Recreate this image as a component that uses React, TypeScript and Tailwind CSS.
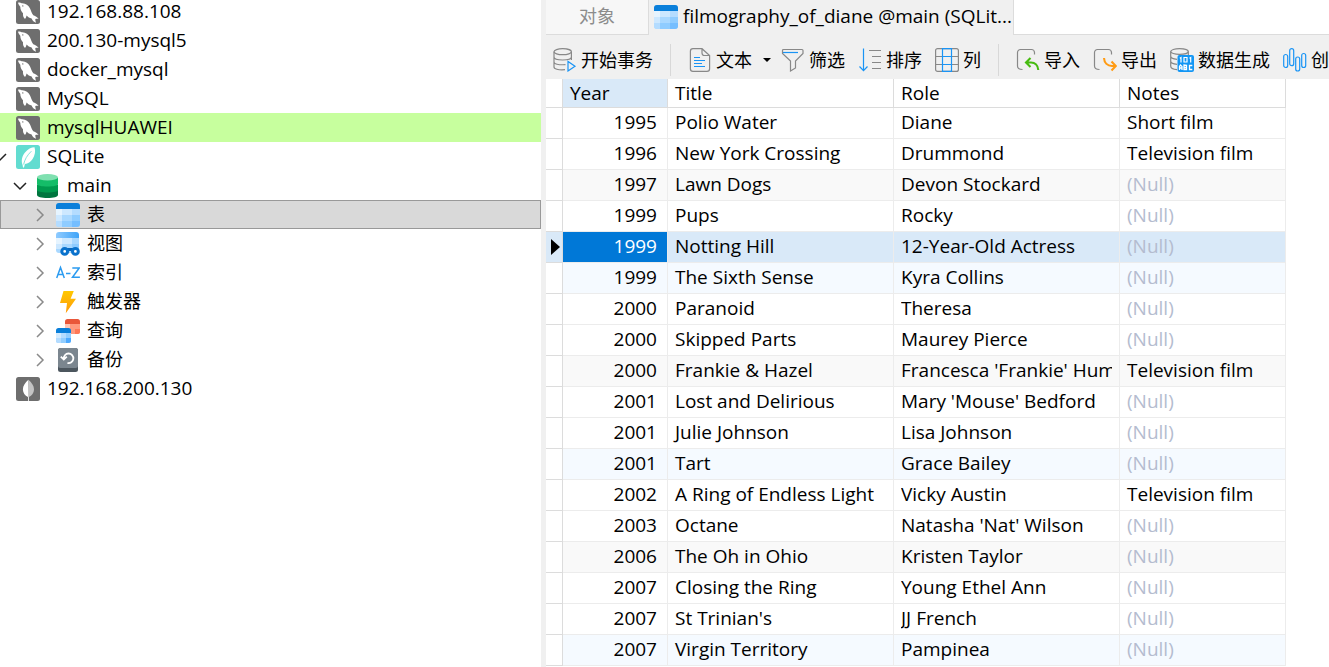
import React from "react";

function MysqlIcon() {
  return (
    <svg viewBox="0 0 24 24" className="size-6 shrink-0" aria-hidden="true">
      <rect width="24" height="24" rx="2.5" fill="#6e6e6e" />
      <path
        d="M2 2.800C3 2.300 4.500 2.400 5.600 3.200C9.500 2.900 12.400 5.200 13.900 8.200C15 10.500 15.800 13.200 17.300 15.300C18.800 15.900 21 16.600 22.600 18.900C21.300 18.500 20.200 18.600 19.300 19C19.300 20.300 19.400 21.400 20 22.700C17.900 22 16.500 20.400 15.600 18.400C13.600 18 11.900 16.800 10.600 15.400C10.300 16.700 9.800 17.900 9 19C7.300 17.500 6.800 15.500 7 13.200C5.200 11.600 4.300 9.300 4.300 6.800C3.200 5.600 2.300 4.300 2 2.800Z"
        fill="#fff"
      />
      <circle cx="6.800" cy="5.900" r="0.700" fill="#6e6e6e" />
    </svg>
  );
}

function SqliteIcon() {
  return (
    <svg viewBox="0 0 24 24" className="size-6 shrink-0" aria-hidden="true">
      <rect width="24" height="24" rx="2.500" fill="#62dcd0" />
      <path
        d="M6.600 20C4.800 15.500 6.200 11 9 7.500C11.800 4 15.500 2.300 18.500 2.300C19.800 6 18.900 10.500 16.600 14C14.600 17.100 12 18.800 8.900 18.900L8 22.500H7Z"
        fill="#fff"
      />
      <path d="M7.600 19.500C8.700 14.500 11.200 10.200 15.400 6.200" fill="none" stroke="#62dcd0" strokeWidth="0.800" />
    </svg>
  );
}

function MongoIcon() {
  return (
    <svg viewBox="0 0 24 24" className="size-6 shrink-0" aria-hidden="true">
      <rect width="24" height="24" rx="2.500" fill="#6e6e6e" />
      <path d="M12.400 2.800C9 6 6.900 8.800 6.900 12.400C6.900 15.700 8.900 18.300 12 20V24H12.800V20Z" fill="#fff" />
      <path d="M12.400 2.800C15.900 6 18 8.800 18 12.400C18 15.700 15.900 18.300 12.800 20L12.400 20Z" fill="#c4c4c4" />
    </svg>
  );
}

function DatabaseIcon() {
  return (
    <svg viewBox="0 0 24 24" className="size-6 shrink-0" aria-hidden="true">
      <path d="M1 16V21C1 22.700 5.500 24 11.500 24S22 22.700 22 21V16Z" fill="#00753f" />
      <path d="M1 10.500V16C1 17.500 5.500 18.500 11.500 18.500S22 17.500 22 16V10.500Z" fill="#009a4e" />
      <path d="M1 3.500V10C1 11.600 5.500 12.500 11.500 12.500S22 11.600 22 10V3.500Z" fill="#14bd68" />
      <ellipse cx="11.500" cy="3.200" rx="10.500" ry="3.200" fill="#7fe0b0" />
    </svg>
  );
}

function TableIcon() {
  return (
    <svg viewBox="0 0 24 24" className="size-6 shrink-0" aria-hidden="true">
      <defs>
        <clipPath id="table-clip">
          <rect width="24" height="24" rx="3" />
        </clipPath>
      </defs>
      <g clipPath="url(#table-clip)">
        <rect width="24" height="24" fill="#a9d8ff" />
        <rect width="24" height="6" fill="#0a7fda" />
        <path d="M0 6H6V12H0Z" fill="#e6f4ff" />
        <path d="M6 6H16V12H6ZM0 12H6V18H0Z" fill="#cde8ff" />
        <path d="M0 18H6V24H0ZM16 6H24V12H16Z" fill="#b4dcff" />
        <path d="M16 12H24V18H16ZM6 18H16V24H6Z" fill="#8fccff" />
        <path d="M16 18H24V24H16Z" fill="#75beff" />
      </g>
    </svg>
  );
}

function ViewIcon() {
  return (
    <svg viewBox="0 0 24 24" className="size-6 shrink-0" aria-hidden="true">
      <defs>
        <linearGradient id="view-head" x1="0" x2="1">
          <stop offset="0" stopColor="#8fcbff" />
          <stop offset="1" stopColor="#3fa4f8" />
        </linearGradient>
      </defs>
      <path d="M0 6V3A3 3 0 0 1 3 0H20A3 3 0 0 1 23 3V6Z" fill="url(#view-head)" />
      <path d="M0 6H23V21H3A3 3 0 0 1 0 18Z" fill="#a9d8ff" />
      <path d="M0 6H6V12H0Z" fill="#e6f4ff" />
      <path d="M6 6H16V12H6ZM0 12H6V17H0Z" fill="#cde8ff" />
      <path d="M16 12H23V18H16Z" fill="#8fccff" />
      <path d="M9 17.500H19" stroke="#0867bd" strokeWidth="3" />
      <circle cx="8.700" cy="19.400" r="2.900" fill="#fff" stroke="#0a72cc" strokeWidth="3" />
      <circle cx="19.400" cy="19.400" r="2.900" fill="#fff" stroke="#0a72cc" strokeWidth="3" />
    </svg>
  );
}

function IndexIcon() {
  return (
    <svg viewBox="0 0 24 24" className="size-6 shrink-0" fill="none" stroke="#2b9bf0" strokeWidth="1.500" aria-hidden="true">
      <path d="M0.700 17L4.500 6.500L8.300 17M2 13.500H7M10 12.500H14.500M16.300 7H23.200L16.500 16.300H23.900" />
    </svg>
  );
}

function TriggerIcon() {
  return (
    <svg viewBox="0 0 24 24" className="size-6 shrink-0" aria-hidden="true">
      <defs>
        <linearGradient id="bolt" x1="0" y1="0" x2="0" y2="1">
          <stop offset="0" stopColor="#ffc800" />
          <stop offset="1" stopColor="#ff9a0a" />
        </linearGradient>
      </defs>
      <path d="M7.500 1H17.800L14.600 8.800H20L9.800 23.200L11 13H4Z" fill="url(#bolt)" />
    </svg>
  );
}

function QueryIcon() {
  return (
    <svg viewBox="0 0 24 24" className="size-6 shrink-0" aria-hidden="true">
      <path d="M9 5V2.500A2.500 2.500 0 0 1 11.500 0H21.500A2.500 2.500 0 0 1 24 2.500V5Z" fill="#e9573a" />
      <path d="M9 5H24V12.500A2.500 2.500 0 0 1 21.500 15H9Z" fill="#ff9a7f" />
      <path d="M9 5H14V10H9Z" fill="#ffc5b5" />
      <path d="M19 10H24V12.500A2.500 2.500 0 0 1 21.500 15H19Z" fill="#ff7856" />
      <path d="M0 14V11.500A2.500 2.500 0 0 1 2.500 9H12.500A2.500 2.500 0 0 1 15 11.500V14Z" fill="#0a7fda" />
      <path d="M0 14H15V21.500A2.500 2.500 0 0 1 12.500 24H2.500A2.500 2.500 0 0 1 0 21.500Z" fill="#93ceff" />
      <path d="M0 14H5V19H0Z" fill="#d3ebff" />
      <path d="M5 14H10V19H5ZM0 19H5V24H2.500A2.500 2.500 0 0 1 0 21.500Z" fill="#b4dcff" />
      <path d="M10 19H15V21.500A2.500 2.500 0 0 1 12.500 24H10Z" fill="#4eaaff" />
    </svg>
  );
}

function BackupIcon() {
  return (
    <svg viewBox="0 0 24 24" className="size-6 shrink-0" aria-hidden="true">
      <rect x="2" width="20" height="24" rx="2.500" fill="#4c565e" />
      <rect x="2" width="20" height="20" rx="2.500" fill="#7b868f" />
      <path d="M7.800 11A4.800 4.800 0 1 1 11.500 15M4.800 8.600L7.800 11.600L10.800 8.600" fill="none" stroke="#fff" strokeWidth="1.800" />
    </svg>
  );
}

function Chevron({ open = false }: { open?: boolean }) {
  return (
    <svg viewBox="0 0 16 16" className="size-4 shrink-0" fill="none" stroke={open ? "#222" : "#8a8a8a"} strokeWidth="1.500" aria-hidden="true">
      <path d={open ? "M2 5L8 11L14 5" : "M5 2L11 8L5 14"} />
    </svg>
  );
}

function TransactionIcon() {
  return (
    <svg viewBox="0 0 24 24" className="size-6 shrink-0" fill="none" stroke="#888" strokeWidth="1.200" aria-hidden="true">
      <ellipse cx="9.700" cy="3.700" rx="8.700" ry="3" />
      <path d="M1 3.700V19C1 21 5 22.200 12 21.700M18.400 3.700V12M1 9C1 11 5 12 9.700 12S18.400 11 18.400 9M1 14C1 16 5 17 12.500 16.700" />
      <path d="M15 13.500V23L22 18.300Z" stroke="#1a94f5" />
    </svg>
  );
}

function TextIcon() {
  return (
    <svg viewBox="0 0 24 24" className="size-6 shrink-0" fill="none" stroke="#888" strokeWidth="1.200" aria-hidden="true">
      <path d="M14 0.700H5A2.600 2.600 0 0 0 2.400 3.300V20.700A2.600 2.600 0 0 0 5 23.300H19A2.600 2.600 0 0 0 21.600 20.700V7.500ZM14 0.700V5A2.500 2.500 0 0 0 16.500 7.500H21.600" />
      <path d="M6 9.500H12M6 12.500H17M6 15.500H14M6 18.500H17" stroke="#1a94f5" />
    </svg>
  );
}

function FilterIcon() {
  return (
    <svg viewBox="0 0 24 24" className="size-6 shrink-0" fill="none" stroke="#888" strokeWidth="1.200" aria-hidden="true">
      <path d="M2.500 1.500H21A1 1 0 0 1 22 2.500V5.500L14.500 13V20L9.500 23V13L1.500 5.500V2.500A1 1 0 0 1 2.500 1.500Z" />
      <path d="M2 4.500H17" stroke="#1a94f5" />
    </svg>
  );
}

function SortIcon() {
  return (
    <svg viewBox="0 0 24 24" className="size-6 shrink-0" fill="none" stroke="#888" strokeWidth="1.200" aria-hidden="true">
      <path d="M11 2.500H23M14 8.500H23M14 14.500H23M14 20.500H23" />
      <path d="M5.500 0.500V23M1.500 18.500L5.500 22.700L9.500 18.500" stroke="#1a94f5" />
    </svg>
  );
}

function ColumnsIcon() {
  return (
    <svg viewBox="0 0 24 24" className="size-6 shrink-0" fill="none" stroke="#888" strokeWidth="1.200" aria-hidden="true">
      <rect x="0.600" y="0.600" width="22.800" height="22.800" rx="2" />
      <path d="M0.500 8.500H23.500M0.500 16.500H23.500" />
      <path d="M7.500 0.600H16.500V23.400H7.500ZM7.500 8.500H16.500M7.500 16.500H16.500" stroke="#1a94f5" />
    </svg>
  );
}

function ImportIcon() {
  return (
    <svg viewBox="0 0 24 24" className="size-6 shrink-0" fill="none" aria-hidden="true">
      <path d="M18.500 6.500V4.500A3 3 0 0 0 15.500 1.500H4.500A3 3 0 0 0 1.500 4.500V18C1.500 20.500 3 21.500 6.500 21.500" stroke="#888" strokeWidth="1.200" />
      <path d="M14.500 10L10 14.500L14.500 19M10.500 14.500H15C19 14.500 22 17.500 22.300 22" stroke="#46bb10" strokeWidth="2.100" />
    </svg>
  );
}

function ExportIcon() {
  return (
    <svg viewBox="0 0 24 24" className="size-6 shrink-0" fill="none" aria-hidden="true">
      <path d="M18.500 6.500V4.500A3 3 0 0 0 15.500 1.500H4.500A3 3 0 0 0 1.500 4.500V18C1.500 20.500 3 21.500 6.500 21.500" stroke="#888" strokeWidth="1.200" />
      <path d="M18.500 13.500L22.800 18L18.500 22.500M22.300 18H19C14.500 18 11.300 15 11 10" stroke="#ff9b14" strokeWidth="2.100" />
    </svg>
  );
}

function GenerateIcon() {
  return (
    <svg viewBox="0 0 24 24" className="size-6 shrink-0" fill="none" stroke="#888" strokeWidth="1.200" aria-hidden="true">
      <ellipse cx="9.500" cy="3.500" rx="8.800" ry="2.900" />
      <path d="M0.700 3.500V18C0.700 20 3 21.400 7 21.700M18.300 3.500V8M0.700 8C0.700 10 3 11 7 11.300M0.700 13C0.700 15 3 16 7 16.300" />
      <rect x="7.500" y="7" width="16.500" height="17" rx="2" fill="#1296f5" stroke="none" />
      <path d="M9.800 10.200L11 9.500V14.500M14 9.500H17V14H14ZM19.500 10.200L20.700 9.500V14.500" stroke="#fff" />
      <path d="M9.500 22V18.500L10.500 17L12 18.500V22M9.500 20H12M14 17V21.500H16.500V19.500H14.500H16.500V17.300ZM22.300 17.500H19.500V21.500H22.300" stroke="#fff" strokeWidth="1.300" />
    </svg>
  );
}

function ChartIcon() {
  return (
    <svg viewBox="0 0 24 24" className="size-6 shrink-0" fill="none" stroke="#1a94f5" strokeWidth="1.200" aria-hidden="true">
      <rect x="0.700" y="6.500" width="4" height="13" rx="2" />
      <rect x="6.700" y="0.700" width="4" height="17" rx="2" />
      <rect x="12.700" y="9" width="4" height="14" rx="2" />
      <rect x="18.700" y="5.500" width="4" height="14" rx="2" />
    </svg>
  );
}

type Node = {
  label: string;
  icon: () => React.JSX.Element;
  indent: string;
  state?: "open" | "closed";
  look?: string;
};

const root = "pl-4";
const child = "pl-8 text-[18px]";
const nodes: Node[] = [
  { label: "192.168.88.108", icon: MysqlIcon, indent: root },
  { label: "200.130-mysql5", icon: MysqlIcon, indent: root },
  { label: "docker_mysql", icon: MysqlIcon, indent: root },
  { label: "MySQL", icon: MysqlIcon, indent: root },
  { label: "mysqlHUAWEI", icon: MysqlIcon, indent: root, look: "bg-[#c7ff9e]" },
  { label: "SQLite", icon: SqliteIcon, indent: "-ml-2", state: "open" },
  { label: "main", icon: DatabaseIcon, indent: "pl-3", state: "open" },
  { label: "表", icon: TableIcon, indent: child, state: "closed", look: "bg-[#d9d9d9] outline outline-1 -outline-offset-1 outline-[#999]" },
  { label: "视图", icon: ViewIcon, indent: child, state: "closed" },
  { label: "索引", icon: IndexIcon, indent: child, state: "closed" },
  { label: "触发器", icon: TriggerIcon, indent: child, state: "closed" },
  { label: "查询", icon: QueryIcon, indent: child, state: "closed" },
  { label: "备份", icon: BackupIcon, indent: child, state: "closed" },
  { label: "192.168.200.130", icon: MongoIcon, indent: root },
];

const films: [number, string, string, string?][] = [
  [1995, "Polio Water", "Diane", "Short film"],
  [1996, "New York Crossing", "Drummond", "Television film"],
  [1997, "Lawn Dogs", "Devon Stockard"],
  [1999, "Pups", "Rocky"],
  [1999, "Notting Hill", "12-Year-Old Actress"],
  [1999, "The Sixth Sense", "Kyra Collins"],
  [2000, "Paranoid", "Theresa"],
  [2000, "Skipped Parts", "Maurey Pierce"],
  [2000, "Frankie & Hazel", "Francesca 'Frankie' Hump", "Television film"],
  [2001, "Lost and Delirious", "Mary 'Mouse' Bedford"],
  [2001, "Julie Johnson", "Lisa Johnson"],
  [2001, "Tart", "Grace Bailey"],
  [2002, "A Ring of Endless Light", "Vicky Austin", "Television film"],
  [2003, "Octane", "Natasha 'Nat' Wilson"],
  [2006, "The Oh in Ohio", "Kristen Taylor"],
  [2007, "Closing the Ring", "Young Ethel Ann"],
  [2007, "St Trinian's", "JJ French"],
  [2007, "Virgin Territory", "Pampinea"],
];

const selectedRow = 4;

function rowColor(i: number) {
  if (i === selectedRow) return "bg-[#d9e9f8]";
  if (i % 6 === 5) return "bg-[#f5faff]";
  if (i % 6 === 2) return "bg-[#f9f9f9]";
  return "bg-white";
}

function ToolButton({ icon: Icon, label, children }: { icon: () => React.JSX.Element; label: string; children?: React.ReactNode }) {
  return (
    <button type="button" className="flex shrink-0 items-center gap-1 whitespace-nowrap">
      <Icon />
      <span>{label}</span>
      {children}
    </button>
  );
}

function Divider() {
  return <div className="mx-1 h-8 w-px shrink-0 bg-[#d8d8d8]" />;
}

export default function App() {
  return (
    <div className="flex h-screen overflow-hidden bg-white font-['Open_Sans','Noto_Sans_CJK_SC',sans-serif] text-[19px] leading-[26px] text-black">
      <nav className="min-w-0 flex-[541_1_0%] overflow-hidden">
        <ul className="-mt-[3px]">
          {nodes.map((n) => (
            <li key={n.label} className={n.look}>
              <a href="#" className={`flex h-[29px] items-center whitespace-nowrap ${n.indent}`}>
                {n.state && (
                  <span className="mr-2 flex">
                    <Chevron open={n.state === "open"} />
                  </span>
                )}
                <n.icon />
                <span className="ml-[7px] pb-0.5">{n.label}</span>
              </a>
            </li>
          ))}
        </ul>
      </nav>

      <div className="w-[5px] shrink-0 bg-[#f0f0f0]" />

      <main className="min-w-0 flex-[783_1_0%] overflow-hidden">
        <div role="tablist" className="flex h-[35px]">
          <button type="button" role="tab" aria-selected="false" className="w-[103px] shrink-0 border-r border-b border-[#dcdcdc] bg-[#f7f7f7] pb-0.5 text-[18px] text-[#8c8c8c]">
            对象
          </button>
          <button type="button" role="tab" aria-selected="true" className="flex w-[365px] shrink-0 items-center gap-[5px] border-r border-[#dcdcdc] bg-[#f0f0f0] pb-0.5 pl-[5px] whitespace-nowrap">
            <TableIcon />
            <span className="pb-0.5">filmography_of_diane @main (SQLit...</span>
          </button>
          <div className="flex-1 border-b border-[#dcdcdc]" />
        </div>

        <div role="toolbar" className="flex h-11 items-center gap-[13px] overflow-hidden bg-[#f0f0f0] pt-1.5 pl-[7px] text-[18px]">
          <ToolButton icon={TransactionIcon} label="开始事务" />
          <Divider />
          <ToolButton icon={TextIcon} label="文本">
            <svg viewBox="0 0 8 4" className="-mr-[3px] ml-[7px] h-1 w-2" aria-hidden="true">
              <path d="M0 0H8L4 4Z" />
            </svg>
          </ToolButton>
          <ToolButton icon={FilterIcon} label="筛选" />
          <ToolButton icon={SortIcon} label="排序" />
          <ToolButton icon={ColumnsIcon} label="列" />
          <Divider />
          <ToolButton icon={ImportIcon} label="导入" />
          <ToolButton icon={ExportIcon} label="导出" />
          <ToolButton icon={GenerateIcon} label="数据生成" />
          <ToolButton icon={ChartIcon} label="创建" />
        </div>

        <table className="w-[740px] table-fixed border-separate border-spacing-0">
          <colgroup>
            <col className="w-[17px]" />
            <col className="w-[105px]" />
            <col className="w-[226px]" />
            <col className="w-[226px]" />
            <col className="w-[166px]" />
          </colgroup>
          <thead>
            <tr className="h-[29px] text-left">
              <td className="border-r border-b border-[#dcdcdc] p-0" />
              {["Year", "Title", "Role", "Notes"].map((h) => (
                <th key={h} scope="col" className={`border-r border-b border-[#dcdcdc] px-[7px] py-0 font-normal ${h === "Year" ? "bg-[#d9e9f8]" : ""}`}>
                  {h}
                </th>
              ))}
            </tr>
          </thead>
          <tbody>
            {films.map(([year, title, role, notes], i) => (
              <tr key={title} className={`h-[31px] ${rowColor(i)}`}>
                <td className={`border-r border-b border-[#dcdcdc] p-0 ${i === selectedRow ? "" : "bg-white"}`}>
                  {i === selectedRow && (
                    <svg viewBox="0 0 9 16" className="ml-[5px] h-4 w-[9px]" aria-hidden="true">
                      <path d="M0 0L9 8L0 16Z" />
                    </svg>
                  )}
                </td>
                <td className={`border-r border-b border-[#ececec] pt-0 pr-[10px] pb-0.5 text-right ${i === selectedRow ? "bg-[#0078d7] text-white" : ""}`}>{year}</td>
                <td className="border-r border-b border-[#ececec] px-[7px] pt-0 pb-0.5 whitespace-nowrap">{title}</td>
                <td className="border-r border-b border-[#ececec] px-[7px] pt-0 pb-0.5">
                  <div className="overflow-hidden whitespace-nowrap">{role}</div>
                </td>
                <td className={`border-r border-b border-[#ececec] px-[7px] pt-0 pb-0.5 ${notes ? "" : "text-[#b4bccf]"}`}>{notes ?? "(Null)"}</td>
              </tr>
            ))}
          </tbody>
        </table>
      </main>
    </div>
  );
}
